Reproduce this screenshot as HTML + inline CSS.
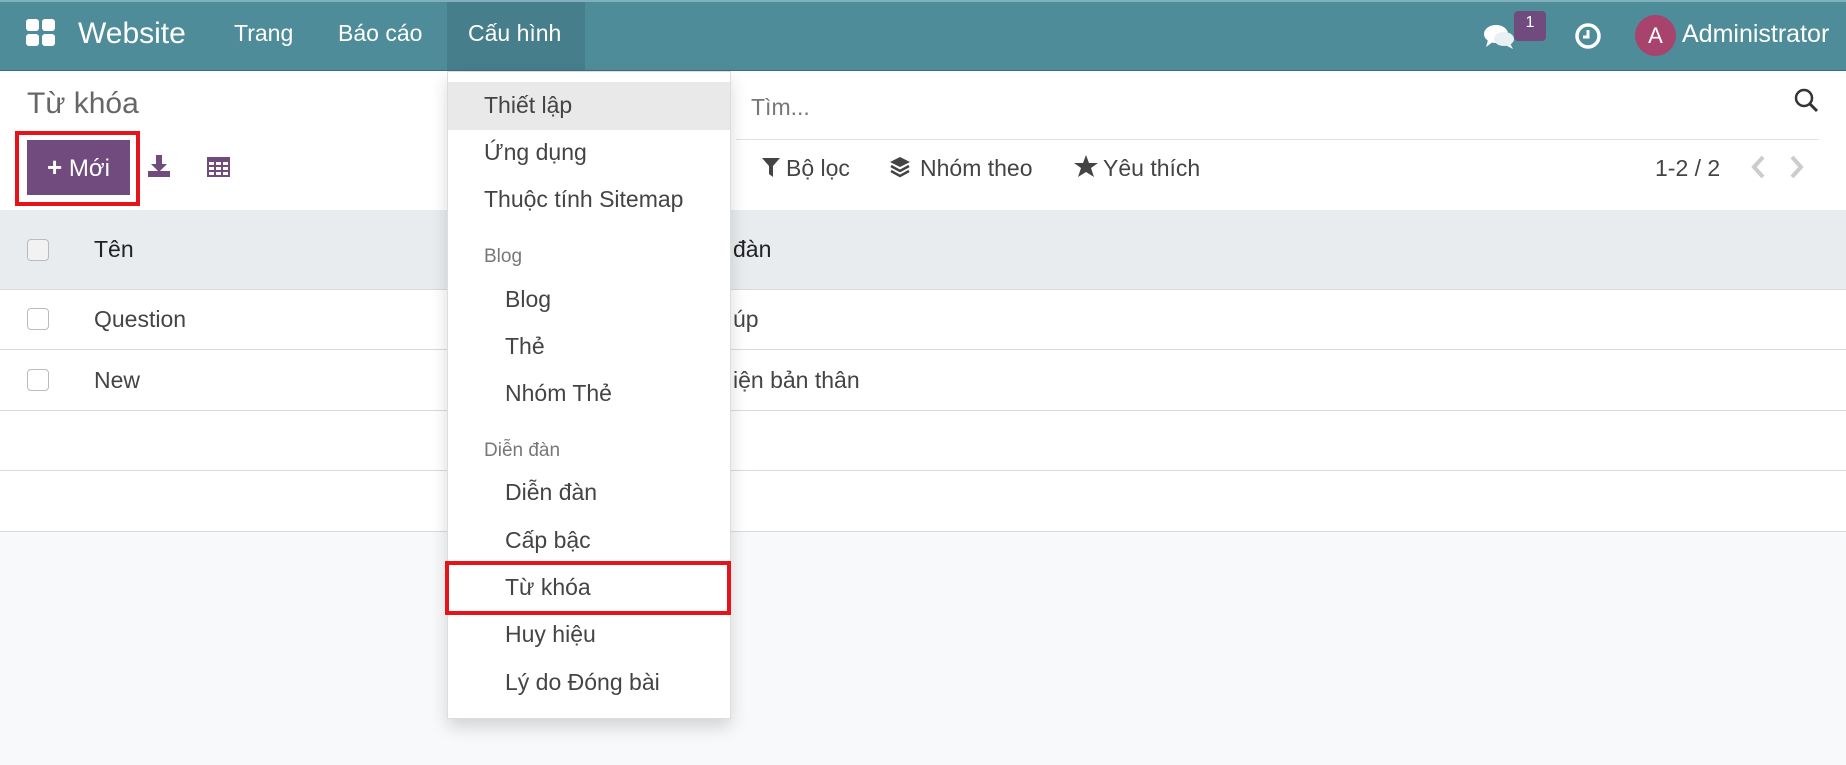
<!DOCTYPE html>
<html><head><meta charset="utf-8"><style>
*{margin:0;padding:0;box-sizing:border-box}
body{width:1846px;height:765px;overflow:hidden;background:#f8f9fa;font-family:"Liberation Sans",sans-serif;position:relative;color:#333}
.a{position:absolute;white-space:nowrap}
.nav{left:0;top:0;width:1846px;height:71px;background:#4f8c99;border-top:2px solid #7fb0bb;border-bottom:1px solid #3a6f7a}
.nt{color:#fff;font-size:23px;top:20px}
.cp{left:0;top:71px;width:1846px;height:139px;background:#fff}
.th{left:0;top:210px;width:1846px;height:79px;background:#e9ecef}
.ln{left:0;width:1846px;height:1px;background:#d8dbde}
.cb{left:27px;width:22px;height:22px;border:1px solid #bbb;border-radius:4px;background:#fff}
.tx{font-size:23px;color:#444}
.dd{left:447px;top:71px;width:284px;height:648px;background:#fff;border:1px solid #ddd;box-shadow:0 8px 16px rgba(0,0,0,.15)}
.mi{font-size:23px;color:#444}
.mh{font-size:19px;color:#777}
</style></head><body>
<div class="a nav"></div>
<svg class="a" style="left:26px;top:19px" width="30" height="28" viewBox="0 0 30 28"><rect x="0" y="0" width="13" height="12" rx="3" fill="#fff"/><rect x="16" y="0" width="13" height="12" rx="3" fill="#fff"/><rect x="0" y="15" width="13" height="12" rx="3" fill="#fff"/><rect x="16" y="15" width="13" height="12" rx="3" fill="#fff"/></svg>
<div class="a nt" style="left:78px;top:17px;font-size:30px">Website</div>
<div class="a nt" style="left:234px">Trang</div>
<div class="a nt" style="left:338px">Báo cáo</div>
<div class="a" style="left:447px;top:2px;width:138px;height:68px;background:#467f8b"></div>
<div class="a nt" style="left:468px">Cấu hình</div>
<svg class="a" style="left:1484px;top:24px" width="32" height="26" viewBox="0 0 32 26"><ellipse cx="12" cy="10" rx="12" ry="9" fill="#fff"/><path d="M4 16 L2 23 L10 17Z" fill="#fff"/><ellipse cx="20" cy="15" rx="10" ry="7" fill="#e8f0f2"/><path d="M26 19 L29 25 L21 21Z" fill="#e8f0f2"/></svg>
<div class="a" style="left:1514px;top:11px;width:32px;height:30px;background:#714b7e;border-radius:4px;color:#fff;font-size:16px;text-align:center;line-height:24px">1</div>
<svg class="a" style="left:1574px;top:22px" width="28" height="28" viewBox="0 0 28 28"><circle cx="14" cy="14" r="11" fill="none" stroke="#fff" stroke-width="3.5"/><path d="M14 8 V15 H9" fill="none" stroke="#fff" stroke-width="3"/></svg>
<div class="a" style="left:1635px;top:15px;width:41px;height:41px;border-radius:50%;background:#a8436e;color:#fff;font-size:22px;text-align:center;line-height:41px">A</div>
<div class="a nt" style="left:1682px;top:20px;font-size:25px">Administrator</div>

<div class="a cp"></div>
<div class="a" style="left:27px;top:87px;font-size:30px;color:#666">Từ khóa</div>
<div class="a" style="left:15px;top:131px;width:125px;height:75px;border:4px solid #e5141b"></div>
<div class="a" style="left:27px;top:140px;width:103px;height:55px;background:#714b7e;color:#fff;font-size:24px;line-height:55px;text-align:center"><b style="font-size:26px">+</b> Mới</div>
<svg class="a" style="left:147px;top:154px" width="24" height="24" viewBox="0 0 24 24"><path d="M9 1h6v9h5l-8 8-8-8h5z" fill="#714b7e"/><rect x="1" y="17" width="22" height="6" fill="#714b7e"/></svg>
<svg class="a" style="left:207px;top:157px" width="23" height="20" viewBox="0 0 23 20"><rect width="23" height="20" fill="#714b7e"/><g fill="#fff"><rect x="2" y="5" width="5" height="3"/><rect x="9" y="5" width="5" height="3"/><rect x="16" y="5" width="5" height="3"/><rect x="2" y="10" width="5" height="3"/><rect x="9" y="10" width="5" height="3"/><rect x="16" y="10" width="5" height="3"/><rect x="2" y="15" width="5" height="3"/><rect x="9" y="15" width="5" height="3"/><rect x="16" y="15" width="5" height="3"/></g></svg>
<div class="a" style="left:751px;top:94px;font-size:23px;color:#777">Tìm...</div>
<svg class="a" style="left:1794px;top:88px" width="26" height="26" viewBox="0 0 26 26"><circle cx="10" cy="10" r="8" fill="none" stroke="#333" stroke-width="2.5"/><path d="M16 16 L23 23" stroke="#333" stroke-width="3"/></svg>
<div class="a" style="left:736px;top:139px;width:1083px;height:1px;background:#dee2e6"></div>
<svg class="a" style="left:762px;top:158px" width="18" height="19" viewBox="0 0 18 19"><path d="M0 0H18L11 8V19L7 16V8Z" fill="#444"/></svg>
<div class="a tx" style="left:786px;top:155px">Bộ lọc</div>
<svg class="a" style="left:889px;top:156px" width="22" height="22" viewBox="0 0 22 22"><path d="M11 1L21 6L11 11L1 6Z" fill="#444"/><path d="M2 10L11 15L20 10" fill="none" stroke="#444" stroke-width="2.5"/><path d="M2 15L11 20L20 15" fill="none" stroke="#444" stroke-width="2.5"/></svg>
<div class="a tx" style="left:920px;top:155px">Nhóm theo</div>
<svg class="a" style="left:1074px;top:155px" width="24" height="23" viewBox="0 0 24 23"><path d="M12 0L15 8H24L17 13L20 22L12 17L4 22L7 13L0 8H9Z" fill="#444"/></svg>
<div class="a tx" style="left:1103px;top:155px">Yêu thích</div>
<div class="a tx" style="left:1655px;top:155px">1-2 / 2</div>
<svg class="a" style="left:1750px;top:155px" width="16" height="24" viewBox="0 0 16 24"><path d="M13 2L4 12L13 22" fill="none" stroke="#ccc" stroke-width="4"/></svg>
<svg class="a" style="left:1789px;top:155px" width="16" height="24" viewBox="0 0 16 24"><path d="M3 2L12 12L3 22" fill="none" stroke="#ccc" stroke-width="4"/></svg>

<div class="a" style="left:0;top:289px;width:1846px;height:243px;background:#fff"></div>
<div class="a th"></div>
<div class="a ln" style="top:289px"></div>
<div class="a ln" style="top:349px"></div>
<div class="a ln" style="top:410px"></div>
<div class="a ln" style="top:470px"></div>
<div class="a ln" style="top:531px"></div>
<div class="a cb" style="top:239px;background:#f2f2f2"></div>
<div class="a tx" style="left:94px;top:236px;color:#222">Tên</div>
<div class="a tx" style="left:733px;top:236px;color:#222">đàn</div>
<div class="a cb" style="top:308px"></div>
<div class="a tx" style="left:94px;top:306px">Question</div>
<div class="a tx" style="left:733px;top:306px">úp</div>
<div class="a cb" style="top:369px"></div>
<div class="a tx" style="left:94px;top:367px">New</div>
<div class="a tx" style="left:733px;top:367px">iện bản thân</div>

<div class="a dd"></div>
<div class="a" style="left:448px;top:82px;width:282px;height:48px;background:#e9e9e9"></div>
<div class="a mi" style="left:484px;top:92px">Thiết lập</div>
<div class="a mi" style="left:484px;top:139px">Ứng dụng</div>
<div class="a mi" style="left:484px;top:186px">Thuộc tính Sitemap</div>
<div class="a mh" style="left:484px;top:246px">Blog</div>
<div class="a mi" style="left:505px;top:286px">Blog</div>
<div class="a mi" style="left:505px;top:333px">Thẻ</div>
<div class="a mi" style="left:505px;top:380px">Nhóm Thẻ</div>
<div class="a mh" style="left:484px;top:440px">Diễn đàn</div>
<div class="a mi" style="left:505px;top:479px">Diễn đàn</div>
<div class="a mi" style="left:505px;top:527px">Cấp bậc</div>
<div class="a mi" style="left:505px;top:574px">Từ khóa</div>
<div class="a mi" style="left:505px;top:621px">Huy hiệu</div>
<div class="a mi" style="left:505px;top:669px">Lý do Đóng bài</div>
<div class="a" style="left:445px;top:561px;width:286px;height:54px;border:4px solid #e5141b"></div>
</body></html>
